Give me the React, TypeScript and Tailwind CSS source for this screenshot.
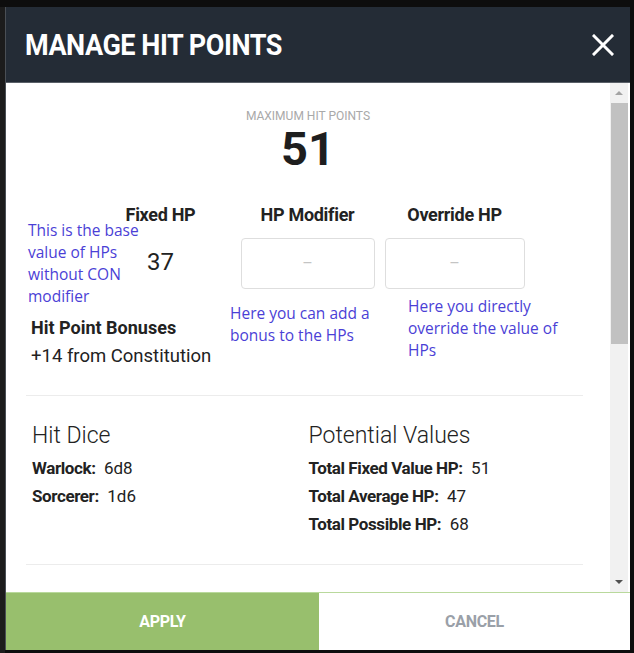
import React from "react";

const Dash = () => <span className="text-[#c4c4c4] text-[16px]">–</span>;

export default function App() {
  return (
    <div className="w-[634px] h-[653px] bg-[#0d0d0d] relative overflow-hidden font-['Roboto',sans-serif]">
      <div className="absolute left-0 top-[7px] w-[5px] h-[646px] bg-[#1c1c1c]" />
      <div className="pt-[7px] pl-[5px]">
        <div className="w-[625px] h-[643px] flex flex-col bg-white border-l border-[#4a4f55]">
          {/* Header */}
          <div className="h-[76px] bg-[#242c36] border-b border-[#5a6068] flex items-center justify-between pl-[19px] pr-[14px] shrink-0">
            <h1 className="text-white font-bold text-[30px] leading-none tracking-[-0.5px] origin-left scale-x-[0.9] inline-block">
              MANAGE HIT POINTS
            </h1>
            <svg width="22" height="22" viewBox="0 0 22 22" className="mr-[2px]">
              <path d="M2 2 L20 20 M20 2 L2 20" stroke="white" strokeWidth="3" strokeLinecap="square" />
            </svg>
          </div>

          {/* Body */}
          <div className="flex flex-1 min-h-0">
            <div className="flex-1 relative overflow-hidden pl-[20px] pr-[27px]">
              {/* Max HP */}
              <div className="flex flex-col items-center pt-[27px] pl-[7px]">
                <div className="text-[12px] text-[#a9a9a9] leading-none">MAXIMUM HIT POINTS</div>
                <div className="text-[47px] font-bold text-[#1e1e1e] leading-none mt-[3px]">51</div>
              </div>

              {/* three columns */}
              <div className="w-[447px] mx-auto grid grid-cols-3 mt-[34px] pl-[6px]">
                <div className="flex flex-col items-center">
                  <div className="text-[18px] font-bold text-[#222] leading-none tracking-[-0.3px]">Fixed HP</div>
                  <div className="text-[24px] text-[#222] mt-[26px] leading-none">37</div>
                </div>
                <div className="flex flex-col items-center">
                  <div className="text-[18px] font-bold text-[#222] leading-none tracking-[-0.3px]">HP Modifier</div>
                  <div className="w-[134px] h-[51px] mt-[14px] border border-[#dedede] rounded-[4px] flex items-center justify-center">
                    <Dash />
                  </div>
                </div>
                <div className="flex flex-col items-center">
                  <div className="text-[18px] font-bold text-[#222] leading-none tracking-[-0.3px]">Override HP</div>
                  <div className="w-[140px] h-[51px] mt-[14px] border border-[#dedede] rounded-[4px] flex items-center justify-center">
                    <Dash />
                  </div>
                </div>
              </div>

              {/* Hit point bonuses */}
              <div className="pl-[5px] mt-[30px]">
                <div className="text-[18px] font-bold text-[#222] leading-none">Hit Point Bonuses</div>
                <div className="text-[18.5px] text-[#222] leading-none mt-[10px]">+14 from Constitution</div>
              </div>

              <div className="h-px bg-[#ececec] mt-[29px]" />

              {/* Hit dice / potential values */}
              <div className="grid grid-cols-2 pl-[6px] mt-[28px]">
                <div>
                  <div className="text-[23px] font-light text-[#222] leading-none">Hit Dice</div>
                  <div className="mt-[13px] flex flex-col gap-[11px] text-[17px] leading-none text-[#222]">
                    <div><span className="font-bold tracking-[-0.4px]">Warlock:</span>&nbsp; 6d8</div>
                    <div><span className="font-bold tracking-[-0.4px]">Sorcerer:</span>&nbsp; 1d6</div>
                  </div>
                </div>
                <div className="pl-[1px]">
                  <div className="text-[23px] font-light text-[#222] leading-none">Potential Values</div>
                  <div className="mt-[13px] flex flex-col gap-[11px] text-[17px] leading-none text-[#222]">
                    <div><span className="font-bold tracking-[-0.4px]">Total Fixed Value HP:</span>&nbsp; 51</div>
                    <div><span className="font-bold tracking-[-0.4px]">Total Average HP:</span>&nbsp; 47</div>
                    <div><span className="font-bold tracking-[-0.4px]">Total Possible HP:</span>&nbsp; 68</div>
                  </div>
                </div>
              </div>

              <div className="h-px bg-[#ececec] mt-[31px]" />

              {/* annotations */}
              <div className="absolute left-[22px] top-[136px] text-[15.5px] leading-[22px] text-[#4b3fd6] font-['Open_Sans',sans-serif]">
                This is the base<br />value of HPs<br />without CON<br />modifier
              </div>
              <div className="absolute left-[224px] top-[219px] text-[15.5px] leading-[22px] text-[#4b3fd6] font-['Open_Sans',sans-serif]">
                Here you can add a<br />bonus to the HPs
              </div>
              <div className="absolute left-[402px] top-[212px] text-[15.5px] leading-[22px] text-[#4b3fd6] font-['Open_Sans',sans-serif]">
                Here you directly<br />override the value of<br />HPs
              </div>
            </div>

            {/* scrollbar */}
            <div className="w-[18px] bg-[#f1f1f1] flex flex-col items-center mr-[2px]">
              <div className="h-[20px] w-full flex items-center justify-center">
                <div className="w-0 h-0 border-l-[4px] border-r-[4px] border-b-[4px] border-l-transparent border-r-transparent border-b-[#a3a3a3]" />
              </div>
              <div className="w-[17px] h-[241px] bg-[#c1c1c1]" />
              <div className="flex-1" />
              <div className="h-[20px] w-full flex items-center justify-center">
                <div className="w-0 h-0 border-l-[4px] border-r-[4px] border-t-[4px] border-l-transparent border-r-transparent border-t-[#505050]" />
              </div>
            </div>
          </div>

          {/* Footer */}
          <div className="h-[58px] border-t border-[#b9d99c] flex shrink-0">
            <button className="w-[313px] bg-[#98bf6d] text-white font-bold text-[16px] tracking-[-0.3px]">APPLY</button>
            <button className="flex-1 bg-white text-[#9aa0a8] font-bold text-[16px] tracking-[-0.3px]">CANCEL</button>
          </div>
        </div>
      </div>
    </div>
  );
}
